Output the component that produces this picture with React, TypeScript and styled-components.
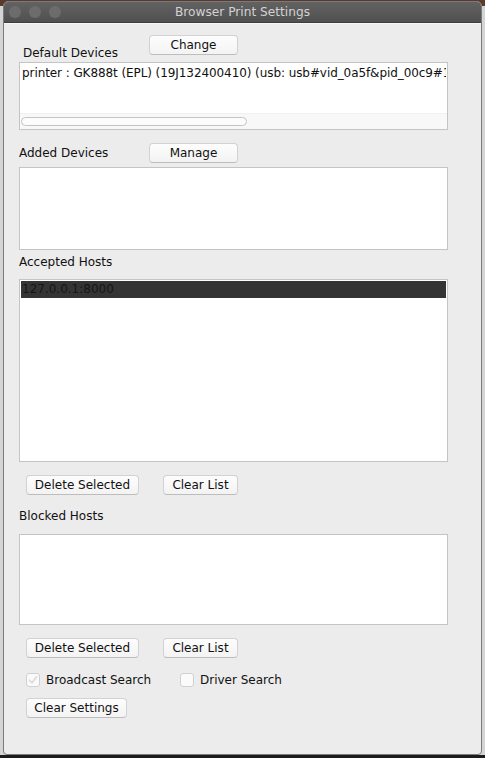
import React from "react";
import styled, { createGlobalStyle } from "styled-components";

const GlobalStyle = createGlobalStyle`
  html, body { margin: 0; padding: 0; }
  body {
    width: 485px;
    height: 758px;
    overflow: hidden;
    background: #cfcfcf;
    font-family: "DejaVu Sans", "Liberation Sans", sans-serif;
  }
`;

const Desktop = styled.div`
  width: 485px;
  height: 758px;
  box-sizing: border-box;
  padding: 1px 3px 3px 3px;
  background: linear-gradient(to bottom, #5b3a2e 0px, #5b3a2e 6px, #d4d4d4 6px, #d4d4d4 755px, #1b1b1b 755px);
`;

const Window = styled.div`
  width: 479px;
  height: 754px;
  box-sizing: border-box;
  border: 1px solid #7a7a7a;
  border-radius: 5px 5px 4px 4px;
  overflow: hidden;
  display: flex;
  flex-direction: column;
  background: #ececec;
`;

const TitleBar = styled.div`
  height: 20px;
  flex: none;
  display: grid;
  grid-template-columns: 1fr auto 1fr;
  align-items: center;
  background: linear-gradient(to bottom, #626262, #505050);
  border-bottom: 1px solid #3e3e3e;
`;

const Lights = styled.div`
  display: flex;
  gap: 8px;
  padding-left: 5px;
`;

const Light = styled.span`
  width: 12px;
  height: 12px;
  border-radius: 50%;
  background: #6c6c6c;
`;

const Title = styled.div`
  color: #d2d2d2;
  font-size: 12.2px;
  line-height: 16px;
`;

const Body = styled.div`
  flex: 1;
  display: flex;
  flex-direction: column;
  padding: 0 34px 0 15px;
  box-shadow: inset 0 1px 0 #f7f7f7;
  color: #111;
  font-size: 12px;
`;

const HeaderRow = styled.div<{ $top: number; $align: string }>`
  display: flex;
  align-items: ${(p) => p.$align};
  margin-top: ${(p) => p.$top}px;
`;

const Label = styled.div<{ $top?: number; $indent?: number; $width?: number }>`
  box-sizing: border-box;
  line-height: 16px;
  margin-top: ${(p) => p.$top ?? 0}px;
  padding-left: ${(p) => p.$indent ?? 0}px;
  width: ${(p) => (p.$width ? `${p.$width}px` : "auto")};
  white-space: nowrap;
`;

const Button = styled.button<{ $width: number }>`
  width: ${(p) => p.$width}px;
  height: 20px;
  box-sizing: border-box;
  padding: 0;
  border: 1px solid #d2d2d2;
  border-bottom-color: #bdbdbd;
  border-radius: 4px;
  background: linear-gradient(to bottom, #fdfdfd, #f3f3f3);
  font-family: "DejaVu Sans", "Liberation Sans", sans-serif;
  font-size: 12px;
  line-height: 18px;
  color: #111;
  text-align: center;
`;

const ListBox = styled.div<{ $top: number; $height: number }>`
  margin-top: ${(p) => p.$top}px;
  height: ${(p) => p.$height}px;
  width: 429px;
  box-sizing: border-box;
  border: 1px solid #c4c4c4;
  background: #fff;
  padding: 1px;
  display: flex;
  flex-direction: column;
  overflow: hidden;
`;

const DeviceItem = styled.div`
  line-height: 18px;
  padding-left: 1px;
  letter-spacing: -0.08px;
  white-space: nowrap;
  overflow: hidden;
  flex: 1;
`;

const ScrollTrack = styled.div`
  height: 15px;
  flex: none;
  margin: 0 -1px -1px;
  background: #f8f8f8;
  border-top: 1px solid #f1f1f1;
  display: flex;
  align-items: center;
  padding-left: 1px;
`;

const ScrollThumb = styled.div`
  width: 226px;
  height: 9px;
  box-sizing: border-box;
  border: 1px solid #c4c4c4;
  border-radius: 5px;
  background: #fcfcfc;
`;

const HostRow = styled.div<{ $selected?: boolean }>`
  height: 17px;
  line-height: 17px;
  padding-left: 1px;
  background: ${(p) => (p.$selected ? "#343434" : "transparent")};
  color: ${(p) => (p.$selected ? "#161616" : "#111")};
`;

const ButtonRow = styled.div<{ $top: number }>`
  display: flex;
  gap: 24px;
  padding-left: 7px;
  margin-top: ${(p) => p.$top}px;
`;

const CheckRow = styled.div`
  display: flex;
  align-items: center;
  padding-left: 7px;
  margin-top: 15px;
  height: 14px;
`;

const CheckItem = styled.label<{ $width?: number }>`
  display: flex;
  align-items: center;
  gap: 6px;
  width: ${(p) => (p.$width ? `${p.$width}px` : "auto")};
  line-height: 16px;
  white-space: nowrap;
`;

const Box = styled.span`
  width: 14px;
  height: 14px;
  box-sizing: border-box;
  border: 1px solid #d0d0d0;
  border-radius: 3px;
  background: #fafafa;
  display: flex;
  align-items: center;
  justify-content: center;
  flex: none;
`;

const SettingsRow = styled.div`
  padding-left: 7px;
  margin-top: 11px;
`;

const Check = () => (
  <svg width="10" height="10" viewBox="0 0 10 10">
    <path d="M1.5 5.2 L4 7.8 L8.6 1.8" fill="none" stroke="#dadada" strokeWidth="1.6" strokeLinecap="round" strokeLinejoin="round" />
  </svg>
);

export default function App() {
  return (
    <>
      <GlobalStyle />
      <Desktop>
        <Window>
          <TitleBar>
            <Lights>
              <Light />
              <Light />
              <Light />
            </Lights>
            <Title>Browser Print Settings</Title>
            <div />
          </TitleBar>
          <Body>
            <HeaderRow $top={12} $align="flex-start">
              <Label $top={10} $indent={4} $width={130}>Default Devices</Label>
              <Button $width={89}>Change</Button>
            </HeaderRow>
            <ListBox $top={1} $height={68}>
              <DeviceItem>printer : GK888t (EPL) (19J132400410) (usb: usb#vid_0a5f&amp;pid_00c9#1</DeviceItem>
              <ScrollTrack>
                <ScrollThumb />
              </ScrollTrack>
            </ListBox>
            <HeaderRow $top={13} $align="center">
              <Label $width={130}>Added Devices</Label>
              <Button $width={89}>Manage</Button>
            </HeaderRow>
            <ListBox $top={4} $height={83} />
            <Label $top={4}>Accepted Hosts</Label>
            <ListBox $top={9} $height={183}>
              <HostRow $selected>127.0.0.1:8000</HostRow>
            </ListBox>
            <ButtonRow $top={13}>
              <Button $width={113}>Delete Selected</Button>
              <Button $width={75}>Clear List</Button>
            </ButtonRow>
            <Label $top={13}>Blocked Hosts</Label>
            <ListBox $top={10} $height={91} />
            <ButtonRow $top={13}>
              <Button $width={113}>Delete Selected</Button>
              <Button $width={75}>Clear List</Button>
            </ButtonRow>
            <CheckRow>
              <CheckItem $width={154}>
                <Box>
                  <Check />
                </Box>
                Broadcast Search
              </CheckItem>
              <CheckItem>
                <Box />
                Driver Search
              </CheckItem>
            </CheckRow>
            <SettingsRow>
              <Button $width={101}>Clear Settings</Button>
            </SettingsRow>
          </Body>
        </Window>
      </Desktop>
    </>
  );
}
